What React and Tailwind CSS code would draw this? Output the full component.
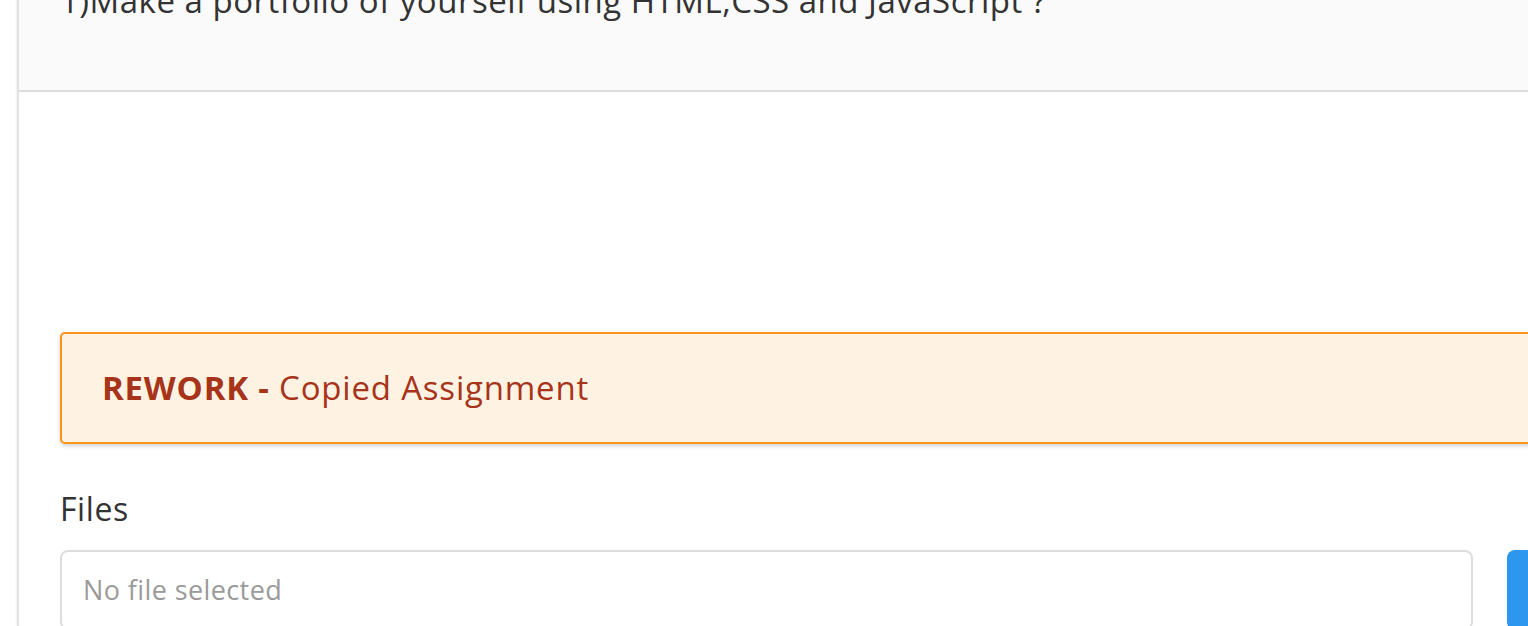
export default function App() {
  const font = { fontFamily: '"Open Sans", "Liberation Sans", sans-serif' };

  return (
    <div className="flex h-[626px] w-[1528px] overflow-hidden bg-white" style={font}>
      <div className="w-[17px] shrink-0 bg-white" />
      <div className="flex w-[1600px] shrink-0 flex-col border-l-2 border-[#e2e2e2] shadow-[-1px_0_2px_rgba(0,0,0,0.06)]">
        {/* Question header */}
        <div className="h-[92px] shrink-0 overflow-hidden border-b-2 border-[#dcdcdc] bg-[#fafafa] pl-[41px]">
          <p className="-mt-[24px] text-[33px] leading-[50px] tracking-[0.5px] text-[#333]">
            1)Make a portfolio of yourself using HTML,CSS and JavaScript ?
          </p>
        </div>

        <div className="flex flex-col pl-[41px] pt-[240px]">
          {/* Rework alert */}
          <div className="flex h-[112px] w-[1520px] items-center rounded-[5px] border-2 border-[#f7941d] bg-[#fef3e2] pl-[40px] shadow-[0_2px_4px_rgba(0,0,0,0.18)]">
            <span className="text-[33px] tracking-[0.8px] text-[#a7341a]">
              <span className="font-bold">REWORK -</span> Copied Assignment
            </span>
          </div>

          <p className="mt-[45px] text-[32px] leading-[40px] tracking-[0.6px] text-[#333]">Files</p>

          <div className="mt-[21px] flex items-start gap-[34px]">
            <div className="flex h-[80px] w-[1413px] shrink-0 items-center rounded-[8px] border-2 border-[#dddddd] bg-white pl-[21px]">
              <span className="text-[27px] tracking-[0.4px] text-[#9a9a9a]">No file selected</span>
            </div>
            <button className="h-[80px] w-[140px] shrink-0 rounded-[8px] bg-[#2d96ee]" />
          </div>
        </div>
      </div>
    </div>
  );
}
